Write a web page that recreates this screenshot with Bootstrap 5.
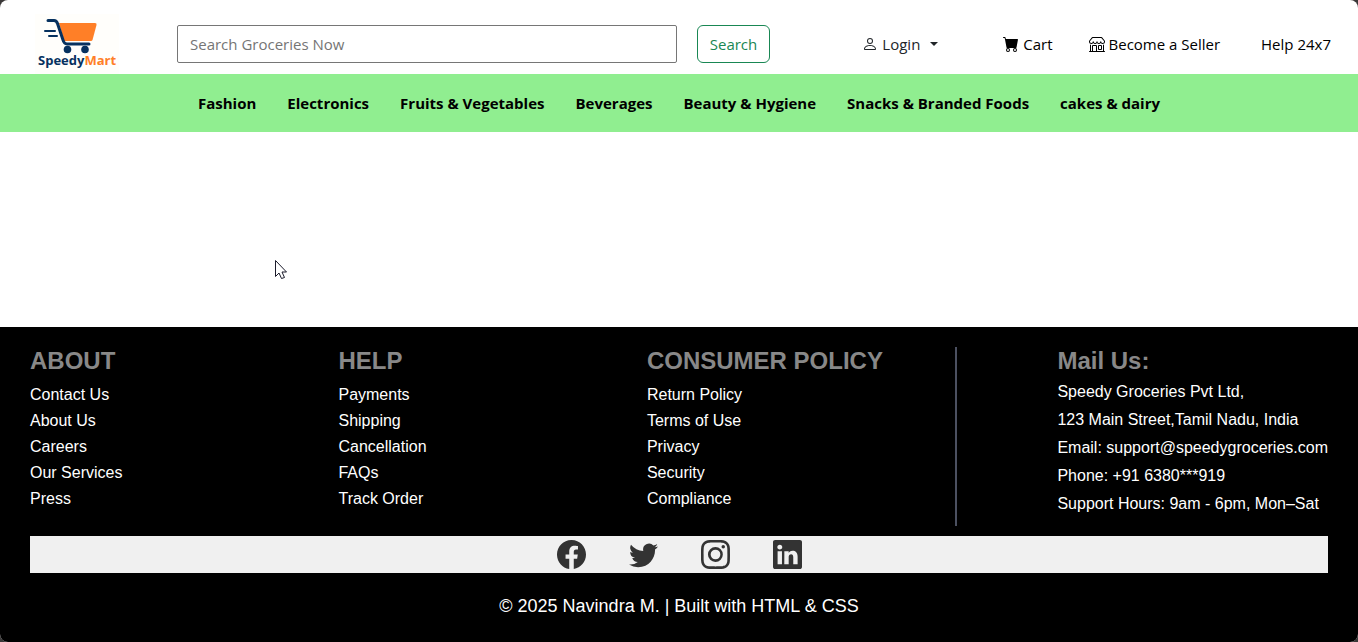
<!DOCTYPE html>
<html lang="en">
<head>
<meta charset="utf-8">
<meta name="viewport" content="width=device-width, initial-scale=1">
<title>SpeedyMart</title>
<link href="https://cdn.jsdelivr.net/npm/bootstrap@5.3.0/dist/css/bootstrap.min.css" rel="stylesheet">
<style>
  html { background: #3a3838; }
  body { background: #3a3838; font-family: "Open Sans", "Noto Sans", sans-serif; font-size: 15px; line-height: 24px; }
  .page-shell { background: #fff; border-radius: 8px; overflow: hidden; }
  .top-bar { height: 74px; padding: 0 27px 0 35px; }
  .brand-logo { width: 84px; height: 60px; margin-top: 13px; }
  .search-form { flex: 0 1 593px; gap: 20px; margin-left: 58px; margin-top: 14px; }
  .search-form .form-control { border: 1px solid #767676; border-radius: 2px; height: 38px; font-size: 15px; }
  .search-form .form-control::placeholder { color: #757575; }
  .search-form .btn { font-size: 15px; height: 38px; width: 73px; padding: 0; flex: none; }
  .top-links { margin-top: 14px; }
  .top-links a { color: #000; text-decoration: none; white-space: nowrap; }
  .top-links svg { vertical-align: -2px; }
  .top-links .login-link { color: #212529; margin-right: 65px; }
  .top-links .login-link::after { margin-left: 6px; }
  .top-links .cart-link { margin-right: 36px; }
  .top-links .seller-link { margin-right: 41px; }
  .category-bar { background: #90ee90; min-height: 58px; gap: 0 31px; }
  .category-bar a { color: #000; font-weight: 700; text-decoration: none; }
  .site-footer { background: #000; color: #fff; font-family: "Liberation Sans", Arial, sans-serif; font-size: 16px; padding: 20px 30px 0; }
  .site-footer a { color: #fff; text-decoration: none; }
  .footer-title { color: #888; font-size: 24px; line-height: 28px; font-weight: 700; margin: 0 0 7px; }
  .link-column { flex: 1 1 0; line-height: 26px; }
  .mail-column { border-left: 2px solid #4b5060; padding-left: 100px; height: 179px; white-space: nowrap; }
  .mail-column .footer-title { margin-bottom: 3px; }
  .mail-column address { line-height: 28px; }
  .social-bar { background: #f0f0f0; height: 37px; margin-top: 10px; gap: 43px; }
  .social-bar a { color: #333; line-height: 0; }
  .social-bar svg { width: 29px; height: 29px; }
  .copyright-line { font-size: 18px; line-height: 26px; padding: 20px 0 23px; }
  .pointer-arrow { left: 275px; top: 260px; }
</style>
</head>
<body>
<div class="page-shell position-relative min-vh-100 d-flex flex-column">
  <header>
    <nav class="top-bar d-flex align-items-center" aria-label="Main">
      <a href="#" aria-label="SpeedyMart home" class="flex-shrink-0 lh-1">
        <svg class="brand-logo" viewBox="0 0 84 60">
          <rect width="84" height="60" fill="#fffefb"/>
          <path d="M24 9H60Q62 9 61.500 11L57.500 26Q57 27 56 27H29Z" fill="#ff7f27"/>
          <g fill="none" stroke="#06315f" stroke-linecap="round" stroke-linejoin="round">
            <path d="M13 6.500H19Q21.500 6.500 22.500 9.500L28 26Q29 30 32 30H54" stroke-width="3"/>
            <path d="M10 17H20M14 22H22" stroke-width="2"/>
          </g>
          <circle cx="32.500" cy="35.500" r="3.800" fill="#06315f"/>
          <circle cx="50" cy="35.500" r="3.800" fill="#06315f"/>
          <text x="3" y="51" font-family="Open Sans, sans-serif" font-size="13" font-weight="700" fill="#06315f">Speedy<tspan fill="#ff7f27">Mart</tspan></text>
        </svg>
      </a>
      <form class="search-form d-flex">
        <input class="form-control" type="search" placeholder="Search Groceries Now" aria-label="Search groceries">
        <button class="btn btn-outline-success" type="button">Search</button>
      </form>
      <div class="top-links d-flex align-items-center ms-auto">
        <a href="#" class="login-link dropdown-toggle"><svg width="16" height="16" viewBox="0 0 16 16" fill="currentColor" class="me-1" aria-hidden="true"><path d="M8 8a3 3 0 1 0 0-6 3 3 0 0 0 0 6m2-3a2 2 0 1 1-4 0 2 2 0 0 1 4 0m4 8c0 1-1 1-1 1H3s-1 0-1-1 1-4 6-4 6 3 6 4m-1-.004c-.001-.246-.154-.986-.832-1.664C11.516 10.680 10.289 10 8 10s-3.516.68-4.168 1.332c-.678.678-.83 1.418-.832 1.664z"/></svg>Login </a>
        <a href="#" class="cart-link"><svg width="16" height="16" viewBox="0 0 16 16" fill="currentColor" class="me-1" aria-hidden="true"><path d="M0 1.500A.5.5 0 0 1 .5 1H2a.5.5 0 0 1 .485.379L2.890 3H14.500a.5.5 0 0 1 .491.592l-1.500 8A.5.5 0 0 1 13 12H4a.5.5 0 0 1-.491-.408L2.010 3.607 1.610 2H.5a.5.5 0 0 1-.5-.5M5 12a2 2 0 1 0 0 4 2 2 0 0 0 0-4m7 0a2 2 0 1 0 0 4 2 2 0 0 0 0-4m-7 1a1 1 0 1 1 0 2 1 1 0 0 1 0-2m7 0a1 1 0 1 1 0 2 1 1 0 0 1 0-2"/></svg>Cart</a>
        <a href="#" class="seller-link"><svg width="16" height="16" viewBox="0 0 16 16" fill="currentColor" class="me-1" aria-hidden="true"><path d="M2.970 1.350A1 1 0 0 1 3.730 1h8.540a1 1 0 0 1 .76.350l2.609 3.044A1.500 1.500 0 0 1 16 5.370v.255a2.375 2.375 0 0 1-4.250 1.458A2.370 2.370 0 0 1 9.875 8 2.370 2.370 0 0 1 8 7.083 2.370 2.370 0 0 1 6.125 8a2.370 2.370 0 0 1-1.875-.917A2.375 2.375 0 0 1 0 5.625V5.370a1.500 1.500 0 0 1 .361-.976zm1.780 4.275a1.375 1.375 0 0 0 2.750 0 .5.5 0 0 1 1 0 1.375 1.375 0 0 0 2.750 0 .5.5 0 0 1 1 0 1.375 1.375 0 1 0 2.750 0V5.370a.5.5 0 0 0-.120-.325L12.270 2H3.730L1.120 5.045A.5.5 0 0 0 1 5.370v.255a1.375 1.375 0 0 0 2.750 0 .5.5 0 0 1 1 0M1.500 8.500A.5.5 0 0 1 2 9v6h1v-5a1 1 0 0 1 1-1h3a1 1 0 0 1 1 1v5h6V9a.5.5 0 0 1 1 0v6h.5a.5.5 0 0 1 0 1H.5a.5.5 0 0 1 0-1H1V9a.5.5 0 0 1 .5-.5M4 15h3v-5H4zm5-5a1 1 0 0 1 1-1h2a1 1 0 0 1 1 1v3a1 1 0 0 1-1 1h-2a1 1 0 0 1-1-1zm3 0h-2v3h2z"/></svg>Become a Seller</a>
        <a href="#">Help 24x7</a>
      </div>
    </nav>
    <nav class="category-bar d-flex flex-wrap align-items-center justify-content-center" aria-label="Categories">
      <a href="#">Fashion</a>
      <a href="#">Electronics</a>
      <a href="#">Fruits &amp; Vegetables</a>
      <a href="#">Beverages</a>
      <a href="#">Beauty &amp; Hygiene</a>
      <a href="#">Snacks &amp; Branded Foods</a>
      <a href="#">cakes &amp; dairy</a>
    </nav>
  </header>

  <main class="flex-grow-1"></main>

  <footer class="site-footer">
    <div class="d-flex">
      <div class="link-column">
        <h2 class="footer-title">ABOUT</h2>
        <ul class="list-unstyled mb-0">
          <li><a href="#">Contact Us</a></li>
          <li><a href="#">About Us</a></li>
          <li><a href="#">Careers</a></li>
          <li><a href="#">Our Services</a></li>
          <li><a href="#">Press</a></li>
        </ul>
      </div>
      <div class="link-column">
        <h2 class="footer-title">HELP</h2>
        <ul class="list-unstyled mb-0">
          <li><a href="#">Payments</a></li>
          <li><a href="#">Shipping</a></li>
          <li><a href="#">Cancellation</a></li>
          <li><a href="#">FAQs</a></li>
          <li><a href="#">Track Order</a></li>
        </ul>
      </div>
      <div class="link-column">
        <h2 class="footer-title">CONSUMER POLICY</h2>
        <ul class="list-unstyled mb-0">
          <li><a href="#">Return Policy</a></li>
          <li><a href="#">Terms of Use</a></li>
          <li><a href="#">Privacy</a></li>
          <li><a href="#">Security</a></li>
          <li><a href="#">Compliance</a></li>
        </ul>
      </div>
      <div class="mail-column">
        <h2 class="footer-title">Mail Us:</h2>
        <address class="mb-0">Speedy Groceries Pvt Ltd,<br>123 Main Street,Tamil Nadu, India<br>Email: support@speedygroceries.com<br>Phone: +91 6380***919<br>Support Hours: 9am - 6pm, Mon–Sat</address>
      </div>
    </div>
    <div class="social-bar d-flex align-items-center justify-content-center">
      <a href="#" aria-label="Facebook"><svg viewBox="0 0 16 16" fill="currentColor"><path d="M16 8.049c0-4.446-3.582-8.050-8-8.050C3.580 0-.002 3.603-.002 8.050c0 4.017 2.926 7.347 6.750 7.951v-5.625h-2.030V8.050H6.750V6.275c0-2.017 1.195-3.131 3.022-3.131.876 0 1.791.157 1.791.157v1.980h-1.009c-.993 0-1.303.621-1.303 1.258v1.510h2.218l-.354 2.326H9.250V16c3.824-.604 6.750-3.934 6.750-7.951"/></svg></a>
      <a href="#" aria-label="Twitter"><svg viewBox="0 0 16 16" fill="currentColor"><path d="M5.026 15c6.038 0 9.341-5.003 9.341-9.334q.002-.211-.006-.422A6.700 6.700 0 0 0 16 3.542a6.700 6.700 0 0 1-1.889.518 3.300 3.300 0 0 0 1.447-1.817 6.500 6.500 0 0 1-2.087.793A3.286 3.286 0 0 0 7.875 6.030a9.320 9.320 0 0 1-6.767-3.429 3.290 3.290 0 0 0 1.018 4.382A3.300 3.300 0 0 1 .640 6.575v.045a3.290 3.290 0 0 0 2.632 3.218 3.200 3.200 0 0 1-.865.115 3 3 0 0 1-.614-.057 3.280 3.280 0 0 0 3.067 2.277A6.600 6.600 0 0 1 .780 13.580a6 6 0 0 1-.780-.045A9.340 9.340 0 0 0 5.026 15"/></svg></a>
      <a href="#" aria-label="Instagram"><svg viewBox="0 0 16 16" fill="currentColor"><path d="M8 0C5.829 0 5.556.010 4.703.048 3.850.088 3.269.222 2.760.420a3.900 3.900 0 0 0-1.417.923A3.900 3.900 0 0 0 .420 2.760C.222 3.268.087 3.850.048 4.700.010 5.555 0 5.827 0 8.001c0 2.172.010 2.444.048 3.297.040.852.174 1.433.372 1.942.205.526.478.972.923 1.417.444.445.890.719 1.416.923.510.198 1.090.333 1.942.372C5.555 15.990 5.827 16 8 16s2.444-.010 3.298-.048c.851-.040 1.434-.174 1.943-.372a3.900 3.900 0 0 0 1.416-.923c.445-.445.718-.891.923-1.417.197-.509.332-1.090.372-1.942C15.990 10.445 16 10.173 16 8s-.010-2.445-.048-3.299c-.040-.851-.175-1.433-.372-1.941a3.900 3.900 0 0 0-.923-1.417A3.900 3.900 0 0 0 13.240.420c-.510-.198-1.092-.333-1.943-.372C10.443.010 10.172 0 7.998 0zm-.717 1.442h.718c2.136 0 2.389.007 3.232.046.780.035 1.204.166 1.486.275.373.145.640.319.920.599s.453.546.598.920c.110.281.240.705.275 1.485.039.843.047 1.096.047 3.231s-.008 2.389-.047 3.232c-.035.780-.166 1.203-.275 1.485a2.500 2.500 0 0 1-.599.919c-.280.280-.546.453-.920.598-.280.110-.704.240-1.485.276-.843.038-1.096.047-3.232.047s-2.390-.009-3.233-.047c-.780-.036-1.203-.166-1.485-.276a2.500 2.500 0 0 1-.920-.598 2.500 2.500 0 0 1-.600-.920c-.109-.281-.240-.705-.275-1.485-.038-.843-.046-1.096-.046-3.233s.008-2.388.046-3.231c.036-.780.166-1.204.276-1.486.145-.373.319-.640.599-.920s.546-.453.920-.598c.282-.110.705-.240 1.485-.276.738-.034 1.024-.044 2.515-.045zm4.988 1.328a.960.960 0 1 0 0 1.920.960.960 0 0 0 0-1.920m-4.270 1.122a4.109 4.109 0 1 0 0 8.217 4.109 4.109 0 0 0 0-8.217m0 1.441a2.667 2.667 0 1 1 0 5.334 2.667 2.667 0 0 1 0-5.334"/></svg></a>
      <a href="#" aria-label="LinkedIn"><svg viewBox="0 0 16 16" fill="currentColor"><path d="M0 1.146C0 .513.526 0 1.175 0h13.650C15.474 0 16 .513 16 1.146v13.708c0 .633-.526 1.146-1.175 1.146H1.175C.526 16 0 15.487 0 14.854zm4.943 12.248V6.169H2.542v7.225zm-1.200-8.212c.837 0 1.358-.554 1.358-1.248-.015-.709-.520-1.248-1.342-1.248S2.400 3.226 2.400 3.934c0 .694.521 1.248 1.327 1.248zm4.908 8.212V9.359c0-.216.016-.432.080-.586.173-.431.568-.878 1.232-.878.869 0 1.216.662 1.216 1.634v3.865h2.401V9.250c0-2.220-1.184-3.252-2.764-3.252-1.274 0-1.845.700-2.165 1.193v.025h-.016l.016-.025V6.169h-2.400c.030.678 0 7.225 0 7.225z"/></svg></a>
    </div>
    <p class="copyright-line text-center mb-0">© 2025 Navindra M. | Built with HTML &amp; CSS</p>
  </footer>

  <svg class="pointer-arrow position-absolute" width="13" height="20" viewBox="0 0 13 20" aria-hidden="true"><path d="M.5.5V16.500L4 13L6.500 18.500L9.500 17.500L7 12H11.500Z" fill="#fff" stroke="#1b1b2b"/></svg>
</div>
<script src="https://cdn.jsdelivr.net/npm/bootstrap@5.3.0/dist/js/bootstrap.bundle.min.js"></script>
</body>
</html>
